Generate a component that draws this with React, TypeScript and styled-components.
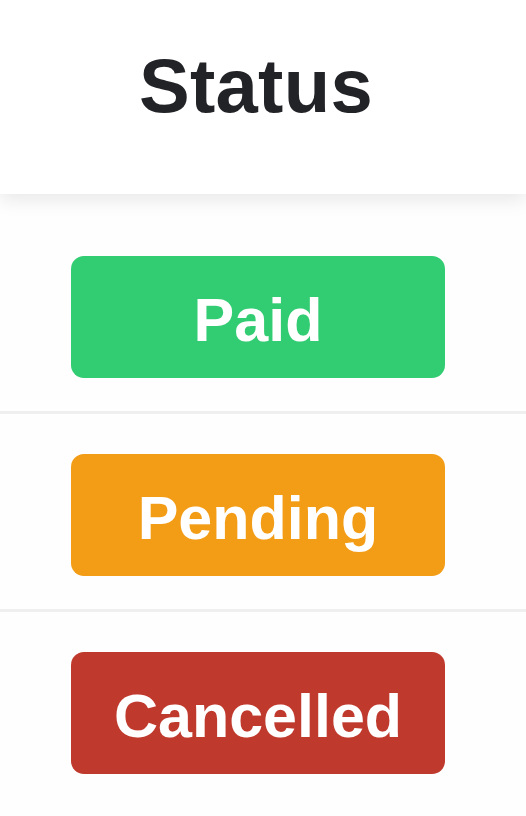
import React from 'react'
import styled, { createGlobalStyle } from 'styled-components'

const GlobalStyle = createGlobalStyle`
  html, body {
    margin: 0;
    padding: 0;
    background: #fefefe;
    font-family: "Liberation Sans", Arial, Helvetica, sans-serif;
  }
`

const Page = styled.div`
  width: 526px;
  min-height: 816px;
  background: #fefefe;
  overflow: hidden;
`

const Header = styled.div`
  position: relative;
  z-index: 1;
  height: 194px;
  background: #fff;
  box-shadow: 0 6px 18px rgba(0, 0, 0, 0.09);
  display: flex;
  justify-content: center;
  box-sizing: border-box;
  padding-top: 44px;
  padding-right: 14px;
`

const Title = styled.h1`
  margin: 0;
  font-size: 76px;
  line-height: 84px;
  font-weight: 700;
  color: #222327;
  letter-spacing: 0.3px;
`

const Body = styled.div`
  padding-top: 22px;
`

const Row = styled.div<{ $last?: boolean }>`
  padding: 40px 0 33px 71px;
  border-bottom: ${(p) => (p.$last ? 'none' : '3px solid #efefef')};
`

const tones = {
  paid: '#32cc72',
  pending: '#f39c16',
  cancelled: '#c0392d',
}

const Badge = styled.div<{ $tone: keyof typeof tones }>`
  width: 374px;
  height: 122px;
  border-radius: 13px;
  background: ${(p) => tones[p.$tone]};
  color: #fff;
  font-size: 61px;
  font-weight: 700;
  display: flex;
  align-items: center;
  justify-content: center;
  padding-top: 6px;
  box-sizing: border-box;
`

const rows: { label: string; tone: keyof typeof tones }[] = [
  { label: 'Paid', tone: 'paid' },
  { label: 'Pending', tone: 'pending' },
  { label: 'Cancelled', tone: 'cancelled' },
]

export default function App() {
  return (
    <Page>
      <GlobalStyle />
      <Header>
        <Title>Status</Title>
      </Header>
      <Body>
        {rows.map((r, i) => (
          <Row key={r.label} $last={i === rows.length - 1}>
            <Badge $tone={r.tone}>{r.label}</Badge>
          </Row>
        ))}
      </Body>
    </Page>
  )
}
